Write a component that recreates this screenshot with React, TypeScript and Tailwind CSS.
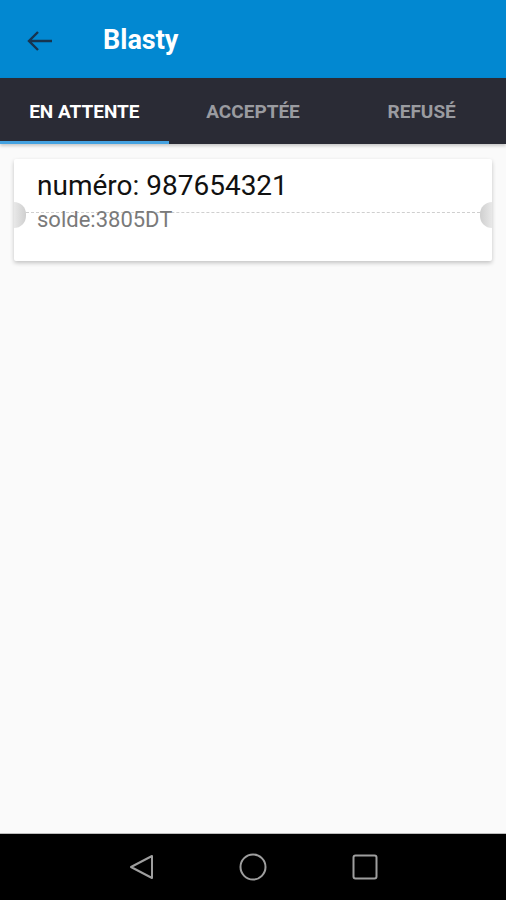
import React from "react";

const tabs = ["EN ATTENTE", "ACCEPTÉE", "REFUSÉ"];

const Ticket = ({ numero, solde }: { numero: string; solde: string }) => {
  return (
    <div className="relative mx-[14px] mt-[15px] h-[102px] rounded-[2px] bg-white shadow-[0_2px_4px_rgba(0,0,0,0.22)]">
      <div className="absolute left-[12px] right-[12px] top-[53px] border-t border-dashed border-[#cfcfcf]" />
      <div className="relative px-[23px] pt-[10px]">
        <div className="text-[28px] leading-[34px] text-[#111]">numéro: {numero}</div>
        <div className="mt-[5px] text-[22px] leading-[24px] text-[#7a7a7a]">solde:{solde}</div>
      </div>
      {/* notches */}
      <div className="absolute left-0 top-[43px] h-[26px] w-[12px] rounded-r-full bg-gradient-to-r from-[#e8e8e8] to-[#cfcfcf]" />
      <div className="absolute right-0 top-[43px] h-[26px] w-[12px] rounded-l-full bg-gradient-to-l from-[#e8e8e8] to-[#cfcfcf]" />
    </div>
  );
};

export default function App() {
  return (
    <div
      className="flex h-[900px] w-[506px] flex-col bg-[#fafafa]"
      style={{ fontFamily: "Roboto, 'Noto Sans', sans-serif" }}
    >
      <div className="flex h-[78px] items-center bg-[#0288d1] pt-[3px]">
        <div className="ml-[25px] flex w-[30px] items-center">
          <svg width="30" height="30" viewBox="0 0 30 30" fill="none" stroke="#17344f" strokeWidth="2.4">
            <path d="M27 15H4M13 6l-9 9 9 9" />
          </svg>
        </div>
        <div className="ml-[48px] text-[27px] font-bold text-white">Blasty</div>
      </div>

      <div className="flex h-[66px] bg-[#2a2b35] shadow-[0_2px_3px_rgba(0,0,0,0.2)]">
        {tabs.map((t, i) => (
          <div key={t} className="relative flex flex-1 items-center justify-center pt-[2px]">
            <span
              className={`text-[19px] font-bold ${i === 0 ? "text-white" : "text-[#9a9ba0]"}`}
            >
              {t}
            </span>
            {i === 0 && <div className="absolute bottom-0 left-0 h-[3px] w-full bg-[#45a2e0]" />}
          </div>
        ))}
      </div>

      <div className="flex-1">
        <Ticket numero="987654321" solde="3805DT" />
      </div>

      <div className="flex h-[67px] items-center justify-center border-t border-[#bdbdbd] bg-black">
        <div className="flex w-[252px] items-center justify-between">
          <svg width="28" height="28" viewBox="0 0 28 28" fill="none" stroke="#9e9e9e" strokeWidth="2" strokeLinejoin="round">
            <path d="M25 3v22L4 14z" />
          </svg>
          <svg width="28" height="28" viewBox="0 0 28 28" fill="none" stroke="#9e9e9e" strokeWidth="2">
            <circle cx="14" cy="14" r="12.5" />
          </svg>
          <svg width="28" height="28" viewBox="0 0 28 28" fill="none" stroke="#9e9e9e" strokeWidth="2">
            <rect x="2.5" y="2.5" width="23" height="23" rx="2" />
          </svg>
        </div>
      </div>
    </div>
  );
}
